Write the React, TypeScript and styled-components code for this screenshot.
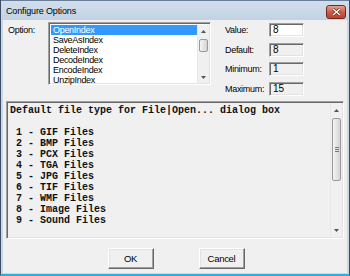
import React from 'react';
import styled, { createGlobalStyle } from 'styled-components';

const Global = createGlobalStyle`
  html, body { margin: 0; padding: 0; background: #1fb0d8; }
  * { box-sizing: border-box; }
`;

const UI = `"Liberation Sans", Arial, sans-serif`;

const Window = styled.div`
  width: 350px;
  height: 276px;
  display: flex;
  flex-direction: column;
  background: #f0f0f0;
  border-left: 1px solid #3a4d63;
  border-right: 1px solid #3a4d63;
  border-bottom: 2px solid #27b4dc;
  overflow: hidden;
`;

const TitleBar = styled.div`
  height: 20px;
  flex: none;
  display: flex;
  align-items: center;
  justify-content: space-between;
  padding: 0 3px 0 5px;
  background: linear-gradient(#d2deec, #c2d2e4);
  border-top: 1px solid #6a7f97;
`;

const Title = styled.span`
  font-family: ${UI};
  font-size: 9px;
  letter-spacing: -0.15px;
  color: #000;
`;

const CloseButton = styled.div`
  width: 20px;
  height: 14px;
  margin-top: 2px;
  border: 1px solid #6e2a22;
  border-radius: 3px;
  background: linear-gradient(#e3a394, #cf5b49 50%, #c0412f);
  display: flex;
  align-items: center;
  justify-content: center;
`;

const Body = styled.div`
  flex: 1;
  display: flex;
  flex-direction: column;
  border-left: 2px solid #c9d7e6;
  border-right: 2px solid #c9d7e6;
  border-bottom: 1px solid #c9d7e6;
  padding: 0 1px 0 3px;
  font-family: ${UI};
  font-size: 9px;
  letter-spacing: -0.3px;
  color: #000;
`;

const Top = styled.div`
  display: flex;
  align-items: flex-start;
  padding: 2px 0 0 2px;
  height: 81px;
  flex: none;
`;

const OptionLabel = styled.div`
  width: 40px;
  padding-top: 3px;
`;

const sunken = `
  border-top: 1px solid #a0a0a0;
  border-left: 1px solid #a0a0a0;
  border-right: 1px solid #fff;
  border-bottom: 1px solid #fff;
  box-shadow: inset 1px 1px 0 #696969, inset -1px -1px 0 #e3e3e3;
`;

const ListBox = styled.div`
  width: 163px;
  height: 63px;
  ${sunken}
  background: #fff;
  display: flex;
  padding: 2px 1px 1px 2px;
`;

const ListItems = styled.div`
  flex: 1;
  display: flex;
  flex-direction: column;
`;

const ListItem = styled.div<{ $selected?: boolean }>`
  height: 10px;
  line-height: 10px;
  padding-left: 2px;
  background: ${(p) => (p.$selected ? '#3399ff' : 'transparent')};
  color: ${(p) => (p.$selected ? '#fff' : '#000')};
  white-space: nowrap;
`;

const ScrollBar = styled.div<{ $w: number }>`
  width: ${(p) => p.$w}px;
  flex: none;
  display: flex;
  flex-direction: column;
  background: #f0f0f0;
  border-left: 1px solid #e8e8e8;
`;

const Arrow = styled.div<{ $h: number }>`
  height: ${(p) => p.$h}px;
  flex: none;
  display: flex;
  align-items: center;
  justify-content: center;
`;

const Track = styled.div<{ $before: number }>`
  flex: 1;
  display: flex;
  flex-direction: column;
  padding-top: ${(p) => p.$before}px;
`;

const Thumb = styled.div<{ $h: number }>`
  height: ${(p) => p.$h}px;
  margin: 0 1px;
  border: 1px solid #9a9a9a;
  border-radius: 2px;
  background: linear-gradient(90deg, #f4f4f4, #e2e2e2 60%, #d2d2d2);
  display: flex;
  align-items: center;
  justify-content: center;
`;

const Fields = styled.div`
  margin-left: 14px;
  display: grid;
  grid-template-columns: 44px 35px;
  grid-auto-rows: 14px;
  row-gap: 5.7px;
  margin-top: 1px;
`;

const FieldLabel = styled.div`
  line-height: 14px;
  white-space: nowrap;
`;

const Input = styled.div<{ $disabled?: boolean }>`
  ${sunken}
  background: ${(p) => (p.$disabled ? '#f0f0f0' : '#fff')};
  padding-left: 3px;
  line-height: 12px;
  font-size: 10px;
  letter-spacing: 0;
`;

const TextArea = styled.div`
  height: 138px;
  flex: none;
  margin-right: 2px;
  ${sunken}
  background: #f0f0f0;
  display: flex;
  padding: 1px 1px 1px 2px;
`;

const Mono = styled.pre`
  flex: 1;
  margin: 0;
  padding: 2px 0 0 1px;
  font-family: "Liberation Mono", "DejaVu Sans Mono", monospace;
  font-weight: bold;
  font-size: 10px;
  letter-spacing: 0;
  line-height: 11px;
  color: #111;
`;

const Buttons = styled.div`
  flex: 1;
  display: flex;
  justify-content: center;
  align-items: flex-start;
  gap: 45px;
  padding-top: 9px;
`;

const Button = styled.div`
  width: 46px;
  height: 21px;
  display: flex;
  align-items: center;
  justify-content: center;
  background: #f0f0f0;
  border-top: 1px solid #fff;
  border-left: 1px solid #fff;
  border-right: 1px solid #696969;
  border-bottom: 1px solid #696969;
  box-shadow: inset -1px -1px 0 #a0a0a0, inset 1px 1px 0 #e3e3e3;
  font-size: 9.5px;
`;

const Tri = ({ down }: { down?: boolean }) => (
  <svg width="5" height="3" viewBox="0 0 5 3">
    <path d={down ? 'M0 0H5L2.5 3Z' : 'M0 3H5L2.5 0Z'} fill="#555" />
  </svg>
);

const items = ['OpenIndex', 'SaveAsIndex', 'DeleteIndex', 'DecodeIndex', 'EncodeIndex', 'UnzipIndex'];

const text = `Default file type for File|Open... dialog box

 1 - GIF Files
 2 - BMP Files
 3 - PCX Files
 4 - TGA Files
 5 - JPG Files
 6 - TIF Files
 7 - WMF Files
 8 - Image Files
 9 - Sound Files`;

export default function App() {
  return (
    <>
      <Global />
      <Window>
        <TitleBar>
          <Title>Configure Options</Title>
          <CloseButton>
            <svg width="9" height="8" viewBox="0 0 9 8">
              <path d="M1 1L8 7M8 1L1 7" stroke="#5a1a12" strokeWidth="2.6" />
              <path d="M1 1L8 7M8 1L1 7" stroke="#fff" strokeWidth="1.6" />
            </svg>
          </CloseButton>
        </TitleBar>
        <Body>
          <Top>
            <OptionLabel>Option:</OptionLabel>
            <ListBox>
              <ListItems>
                {items.map((it, i) => (
                  <ListItem key={it} $selected={i === 0}>{it}</ListItem>
                ))}
              </ListItems>
              <ScrollBar $w={12}>
                <Arrow $h={12}><Tri /></Arrow>
                <Track $before={2}>
                  <Thumb $h={13} />
                </Track>
                <Arrow $h={12}><Tri down /></Arrow>
              </ScrollBar>
            </ListBox>
            <Fields>
              <FieldLabel>Value:</FieldLabel>
              <Input>8</Input>
              <FieldLabel>Default:</FieldLabel>
              <Input $disabled>8</Input>
              <FieldLabel>Minimum:</FieldLabel>
              <Input $disabled>1</Input>
              <FieldLabel>Maximum:</FieldLabel>
              <Input $disabled>15</Input>
            </Fields>
          </Top>
          <TextArea>
            <Mono>{text}</Mono>
            <ScrollBar $w={12}>
              <Arrow $h={14}><Tri /></Arrow>
              <Track $before={1}>
                <Thumb $h={63}>
                  <svg width="4" height="5" viewBox="0 0 4 5">
                    <path d="M0 0.5H4M0 2.5H4M0 4.5H4" stroke="#777" strokeWidth="1" />
                  </svg>
                </Thumb>
              </Track>
              <Arrow $h={14}><Tri down /></Arrow>
            </ScrollBar>
          </TextArea>
          <Buttons>
            <Button>OK</Button>
            <Button>Cancel</Button>
          </Buttons>
        </Body>
      </Window>
    </>
  );
}
